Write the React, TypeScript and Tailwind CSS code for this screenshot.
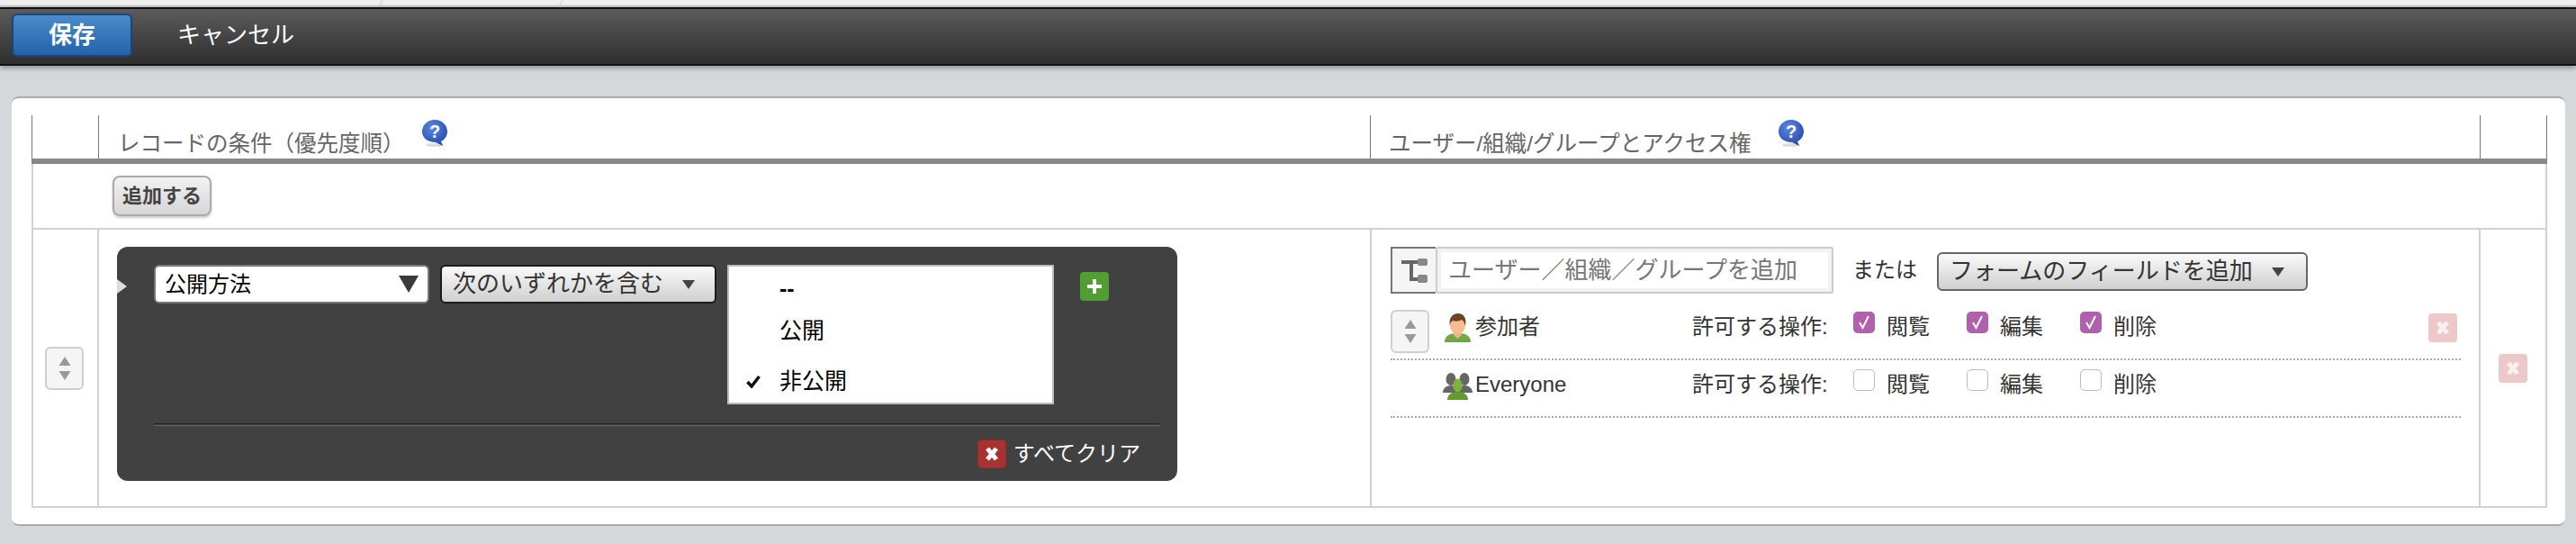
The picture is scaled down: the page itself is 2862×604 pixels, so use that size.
import React from 'react';

const HelpIcon = () => (
  <svg width="30" height="31" viewBox="0 0 30 31" className="shrink-0">
    <defs>
      <radialGradient id="help-blue" cx="0.4" cy="0.3" r="0.8">
        <stop offset="0" stopColor="#5d86e0" />
        <stop offset="1" stopColor="#1f45a8" />
      </radialGradient>
    </defs>
    <ellipse cx="15" cy="28" rx="10" ry="2" fill="#ddd" />
    <path d="M15 0C23 0 29 6 29 13c0 5-3 9-7 11l2 5-8-4C7 25 1 20 1 13 1 6 7 0 15 0z" fill="url(#help-blue)" />
    <text x="15" y="20" textAnchor="middle" fontSize="20" fontWeight="700" fill="#fff" fontFamily="Liberation Sans">?</text>
  </svg>
);

const SortHandle = () => (
  <div className="flex h-[48px] w-[43px] shrink-0 items-center justify-center rounded-md border-2 border-[#cfcfcf] bg-[#f5f5f5]">
    <svg width="14" height="28" viewBox="0 0 14 28">
      <path d="M7 1l6.500 10H.5z" fill="#999" />
      <path d="M.5 17h13L7 27z" fill="#999" />
    </svg>
  </div>
);

const CrossIcon = ({ pale }: { pale?: boolean }) => (
  <div
    className={`flex h-[32px] w-[32px] shrink-0 items-center justify-center rounded-[4px] ${
      pale ? 'bg-[#ecc8c8]' : 'bg-[#a83232] border border-[#8f2b2b]'
    }`}
  >
    <svg width="16" height="16" viewBox="0 0 16 16">
      <path d="M3 2l10 12M13 2L3 14" stroke={pale ? '#faf0f0' : '#fff'} strokeWidth="5" />
    </svg>
  </div>
);

const CaretIcon = () => (
  <svg width="14" height="10" viewBox="0 0 14 10" className="shrink-0">
    <path d="M0 0h14L7 10z" fill="#444" />
  </svg>
);

const PersonIcon = () => (
  <svg width="31" height="32" viewBox="0 0 31 32" className="shrink-0">
    <path d="M1 32c0-7 5-10 14.500-10S30 25 30 32z" fill="#6fa845" />
    <path d="M11 20h9v4l-4.500 4-4.500-4z" fill="#f0b483" />
    <ellipse cx="15.500" cy="13" rx="8.500" ry="10" fill="#f5bd8f" />
    <path d="M7 14C5 5 10 0 16 0s10 5 8 14c-1-4-2-6-4-7-3 2-8 2-10 1-2 1-3 3-3 6z" fill="#6b4526" />
  </svg>
);

const GroupIcon = () => (
  <svg width="33" height="30" viewBox="0 0 33 30" className="shrink-0">
    <ellipse cx="9" cy="7" rx="5.500" ry="7" fill="#666" />
    <ellipse cx="24" cy="7" rx="5.500" ry="7" fill="#666" />
    <path d="M0 22c0-5 4-8 9-8s9 3 9 8z" fill="#666" />
    <path d="M15 22c0-5 4-8 9-8s9 3 9 8z" fill="#666" />
    <ellipse cx="16.500" cy="14" rx="5" ry="7.500" fill="#7bb33c" />
    <path d="M5 30c0-6 5-9 11.500-9S28 24 28 30z" fill="#639c2a" />
  </svg>
);

const TreeIcon = () => (
  <svg width="29" height="27" viewBox="0 0 29 27">
    <path d="M0 4h20M11 4v19h8" stroke="#666" strokeWidth="4" fill="none" />
    <rect x="18" y="0" width="11" height="8" rx="2" fill="#888" />
    <rect x="18" y="18" width="11" height="9" rx="2" fill="#888" />
  </svg>
);

const Perm = ({ label, checked }: { label: string; checked: boolean }) => (
  <div className="flex w-[126px] items-start">
    {checked ? (
      <div className="flex h-[24px] w-[24px] items-center justify-center rounded-[5px] bg-[#b060ac]">
        <svg width="14" height="16" viewBox="0 0 14 16">
          <path d="M2 8l3.500 6L12 1" stroke="#fff" strokeWidth="2" fill="none" />
        </svg>
      </div>
    ) : (
      <div className="h-[24px] w-[24px] rounded-[5px] border border-[#bbb] bg-white" />
    )}
    <span className="ml-[13px] mt-[2px] text-[24px] leading-[30px] text-[#333]">{label}</span>
  </div>
);

const AccessRow = ({
  name,
  icon,
  checked,
  first,
}: {
  name: string;
  icon: React.ReactNode;
  checked: boolean;
  first?: boolean;
}) => (
  <div
    className={`flex w-[1189px] items-start border-b-2 border-dotted border-[#aaa] ${
      first ? 'h-[74px] pt-[20px]' : 'h-[64px] pt-[10px]'
    }`}
  >
    <div className="w-[58px] shrink-0">{first && <div className="-mt-[2px]"><SortHandle /></div>}</div>
    <div className={`flex w-[36px] shrink-0 ${first ? 'mt-[2px] pl-[1px]' : 'mt-[4px]'}`}>{icon}</div>
    <span className="mt-[2px] w-[241px] shrink-0 text-[24px] leading-[30px] text-[#333]">{name}</span>
    <span className="mt-[2px] w-[179px] shrink-0 text-[24px] leading-[30px] text-[#333]">許可する操作:</span>
    <Perm label="閲覧" checked={checked} />
    <Perm label="編集" checked={checked} />
    <Perm label="削除" checked={checked} />
    {first && (
      <div className="ml-auto mr-[4px] mt-[2px]">
        <CrossIcon pale />
      </div>
    )}
  </div>
);

export default function App() {
  return (
    <div className="flex h-[604px] w-[2862px] flex-col overflow-hidden bg-[#d5d8da] font-['Liberation_Sans','Noto_Sans_CJK_JP',sans-serif]">
      {/* Strip of the page behind */}
      <div className="h-[8px] border-b-2 border-[#cdcdcd] bg-[#efefef]">
        <svg width="2862" height="6" viewBox="0 0 2862 6">
          <path d="M425 0l-3 6M625 0l-3 6" stroke="#dcdcdc" strokeWidth="2" />
        </svg>
      </div>

      {/* Toolbar */}
      <div className="flex h-[65px] items-center border-y-2 border-[#111] bg-linear-to-b from-[#5c5c5c] to-[#2f2f2f] pl-[13px] shadow-[0_2px_6px_rgba(0,0,0,0.4)]">
        <button className="-mt-[3px] h-[48px] w-[134px] rounded-md border-2 border-[#1c4480] bg-linear-to-b from-[#4a8ccb] to-[#2263a8] text-[26px] font-bold text-white">
          保存
        </button>
        <button className="-mt-[3px] ml-[50px] text-[26px] text-white">キャンセル</button>
      </div>

      <div className="pl-[13px] pt-[34px]">
        {/* Panel */}
        <div className="h-[477px] w-[2837px] rounded-lg border-y-2 border-t-[#aaa] border-b-[#aaa] bg-white pl-[22px] pt-[19px]">
          {/* Header */}
          <div className="flex h-[54px] w-[2795px] border-b-[6px] border-[#888] text-[24.5px] text-[#666]">
            <div className="w-[75px] border-x border-[#777]" />
            <div className="flex w-[1413px] items-start border-r border-[#777] pl-[21px]">
              <span className="mt-[17px] leading-[30px]">レコードの条件（優先度順）</span>
              <div className="ml-[18px] mt-[5px]">
                <HelpIcon />
              </div>
            </div>
            <div className="flex w-[1233px] items-start border-r border-[#777] pl-[20px]">
              <span className="mt-[17px] leading-[30px]">ユーザー/組織/グループとアクセス権</span>
              <div className="ml-[30px] mt-[5px]">
                <HelpIcon />
              </div>
            </div>
            <div className="w-[74px] border-r border-[#777]" />
          </div>

          {/* Add row */}
          <div className="flex h-[73px] w-[2795px] items-start border-x-2 border-b-2 border-[#d5d1cc] pl-[88px] pt-[13px]">
            <button className="h-[45px] w-[110px] rounded-lg border-2 border-[#aaa] bg-linear-to-b from-[#f2f2f2] to-[#d6d6d6] text-[22px] font-bold text-[#444] shadow-[0_2px_3px_rgba(0,0,0,0.2)]">
              追加する
            </button>
          </div>

          {/* Condition row */}
          <div className="flex h-[309px] w-[2795px] border-x-2 border-b-2 border-[#d5d1cc]">
            <div className="flex w-[73px] shrink-0 items-center border-r-2 border-[#d5d1cc] pl-[13px]">
              <SortHandle />
            </div>

            <div className="w-[1414px] shrink-0 border-r-2 border-[#d5d1cc] pl-[20px] pt-[19px]">
              <div className="relative h-[260px] w-[1178px] rounded-xl bg-[#414141] pl-[41px] pt-[20px]">
                <svg width="11" height="16" viewBox="0 0 11 16" className="absolute left-0 top-[36px]">
                  <path d="M0 0l11 8-11 8z" fill="#ddd" />
                </svg>
                <div className="flex items-start">
                  <div className="flex h-[43px] w-[306px] items-center justify-between rounded-md border-2 border-[#777] bg-white pl-[10px] pr-[10px] text-[24px] text-black">
                    公開方法
                    <svg width="22" height="19" viewBox="0 0 22 19">
                      <path d="M0 0h22L11 19z" fill="#3a3a3a" />
                    </svg>
                  </div>
                  <div className="ml-[12px] flex h-[43px] w-[307px] items-center justify-between rounded-md border-2 border-[#1c1c1c] bg-linear-to-b from-[#fafafa] to-[#cfcfcf] pl-[12px] pr-[22px] text-[26px] text-[#333]">
                    次のいずれかを含む
                    <CaretIcon />
                  </div>
                  <div className="ml-[12px] flex h-[155px] w-[363px] flex-col border-2 border-[#bbb] bg-white text-[25px] text-black">
                    <div className="flex h-[50px] items-center pl-[56px] font-bold">--</div>
                    <div className="flex h-[43px] items-center pl-[56px]">公開</div>
                    <div className="relative flex h-[58px] items-center pl-[56px] pt-[12px]">
                      <svg width="16" height="14" viewBox="0 0 16 14" className="absolute left-[19px] top-[28px]">
                        <path d="M1.500 7l4.500 5L14.500 1" stroke="#111" strokeWidth="3.500" fill="none" />
                      </svg>
                      非公開
                    </div>
                  </div>
                  <div className="ml-[29px] mt-[8px] flex h-[32px] w-[32px] items-center justify-center rounded-[4px] bg-[#519f33]">
                    <svg width="16" height="16" viewBox="0 0 16 16">
                      <path d="M8 0v16M0 8h16" stroke="#fff" strokeWidth="4" />
                    </svg>
                  </div>
                </div>
                <div className="mt-[21px] h-[3px] w-[1117px] border-y border-t-[#222] border-b-[#666]" />
                <div className="mt-[15px] flex w-[1117px] items-center justify-end pr-[21px]">
                  <CrossIcon />
                  <span className="ml-[8px] text-[24px] leading-[32px] text-white">すべてクリア</span>
                </div>
              </div>
            </div>

            <div className="w-[1230px] shrink-0 pl-[21px] pt-[19px]">
              <div className="flex h-[52px] items-center">
                <div className="flex h-[52px] w-[50px] items-center justify-center border-2 border-r-0 border-[#777] bg-[#f5f5f5]">
                  <TreeIcon />
                </div>
                <div className="flex h-[52px] w-[442px] items-center rounded-[3px] border-2 border-[#ccc] bg-white pl-[12px] text-[26px] text-[#777] shadow-[inset_0_0_0_4px_#f2f2f2]">
                  ユーザー／組織／グループを追加
                </div>
                <span className="ml-[21px] text-[24px] text-[#333]">または</span>
                <div className="ml-[22px] mt-[3px] flex h-[43px] w-[412px] items-center justify-between rounded-md border-2 border-[#666] bg-linear-to-b from-[#fafafa] to-[#cfcfcf] pl-[12px] pr-[24px] text-[26px] text-[#333]">
                  フォームのフィールドを追加
                  <CaretIcon />
                </div>
              </div>
              <AccessRow first name="参加者" icon={<PersonIcon />} checked />
              <AccessRow name="Everyone" icon={<GroupIcon />} checked={false} />
            </div>

            <div className="flex flex-1 items-center border-l-2 border-[#d5d1cc] pl-[20px]">
              <CrossIcon pale />
            </div>
          </div>
        </div>
      </div>
    </div>
  );
}
